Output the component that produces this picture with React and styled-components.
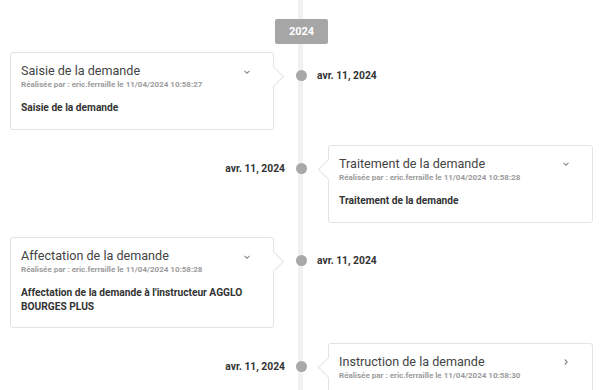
import React from 'react'
import styled, { createGlobalStyle } from 'styled-components'

const GlobalStyle = createGlobalStyle`
  html, body { margin: 0; padding: 0; background: #fff; }
  body { font-family: Roboto, "Liberation Sans", Arial, sans-serif; }
`

const events = [
  {
    side: 'left',
    title: 'Saisie de la demande',
    by: 'Réalisée par : eric.ferraille le 11/04/2024 10:58:27',
    body: 'Saisie de la demande',
    date: 'avr. 11, 2024',
    open: true,
  },
  {
    side: 'right',
    title: 'Traitement de la demande',
    by: 'Réalisée par : eric.ferraille le 11/04/2024 10:58:28',
    body: 'Traitement de la demande',
    date: 'avr. 11, 2024',
    open: true,
  },
  {
    side: 'left',
    title: 'Affectation de la demande',
    by: 'Réalisée par : eric.ferraille le 11/04/2024 10:58:28',
    body: "Affectation de la demande à l'instructeur AGGLO BOURGES PLUS",
    date: 'avr. 11, 2024',
    open: true,
  },
  {
    side: 'right',
    title: 'Instruction de la demande',
    by: 'Réalisée par : eric.ferraille le 11/04/2024 10:58:30',
    body: '',
    date: 'avr. 11, 2024',
    open: false,
  },
]

const Chevron = ({ open }) => (
  <svg width="10" height="10" viewBox="0 0 10 10" fill="none" stroke="#8a8a8a" strokeWidth="1.1">
    {open ? <path d="M2.5 3.8 L5 6.2 L7.5 3.8" /> : <path d="M3.8 2.5 L6.2 5 L3.8 7.5" />}
  </svg>
)

const App = () => {
  return (
    <>
      <GlobalStyle />
      <Timeline>
        <YearRow>
          <Year>2024</Year>
        </YearRow>
        {events.map((e, i) => (
          <Row key={i}>
            <Card side={e.side}>
              <Head>
                <Title>{e.title}</Title>
                <Toggle><Chevron open={e.open} /></Toggle>
              </Head>
              <By>{e.by}</By>
              {e.body ? <Body>{e.body}</Body> : null}
            </Card>
            <Dot />
            <DateLabel side={e.side}>{e.date}</DateLabel>
          </Row>
        ))}
      </Timeline>
    </>
  )
}

const Timeline = styled.div`
  height: 390px;
  overflow: hidden;
  padding: 19px 12px 0 10px;
  box-sizing: border-box;
  display: flex;
  flex-direction: column;
  gap: 14.5px;
  background: linear-gradient(#f1f1f1, #f1f1f1) 298px 0 / 5px 100% no-repeat;
`

const YearRow = styled.div`
  display: flex;
  justify-content: center;
  margin-bottom: -6.5px;
`

const Year = styled.div`
  width: 53px;
  height: 25px;
  background: #a6a6a6;
  border-radius: 2px;
  color: #fff;
  font-size: 11px;
  font-weight: 700;
  display: flex;
  align-items: center;
  justify-content: center;
`

const Row = styled.div`
  display: grid;
  grid-template-columns: 264px 54px 265px;
  align-items: start;
`

const Card = styled.div`
  grid-row: 1;
  grid-column: ${p => (p.side === 'left' ? 1 : 3)};
  position: relative;
  background: #fff;
  border: 1px solid #e3e3e3;
  border-radius: 3px;
  padding: 9px 20px 13px 10px;
  min-height: 54px;
  &::after {
    content: '';
    position: absolute;
    top: 16px;
    width: 14px;
    height: 14px;
    background: #fff;
    border: 1px solid #e3e3e3;
    transform: rotate(45deg);
    ${p =>
      p.side === 'left'
        ? 'right: -8px; border-left: none; border-bottom: none;'
        : 'left: -8px; border-right: none; border-top: none;'}
  }
`

const Head = styled.div`
  display: flex;
  justify-content: space-between;
  align-items: center;
`

const Title = styled.div`
  font-size: 12.6px;
  line-height: 17px;
  color: #444;
`

const Toggle = styled.span`
  display: flex;
  width: 10px;
  height: 10px;
  margin-top: 2px;
  margin-right: 1px;
`

const By = styled.div`
  font-size: 8px;
  font-weight: 700;
  line-height: 12px;
  color: #9b9b9b;
`

const Body = styled.div`
  margin-top: 10px;
  font-size: 10.2px;
  font-weight: 700;
  line-height: 14px;
  color: #333;
`

const Dot = styled.div`
  grid-row: 1;
  grid-column: 2;
  justify-self: center;
  margin-top: 18px;
  margin-left: 1px;
  width: 11px;
  height: 11px;
  border-radius: 50%;
  background: #a8a8a8;
`

const DateLabel = styled.div`
  grid-row: 1;
  grid-column: ${p => (p.side === 'left' ? 3 : 1)};
  justify-self: ${p => (p.side === 'left' ? 'start' : 'end')};
  ${p => (p.side === 'left' ? 'margin-left: -11px;' : 'margin-right: -11px;')}
  margin-top: 17px;
  font-size: 10.3px;
  font-weight: 700;
  line-height: 13px;
  color: #333;
`

export default App
